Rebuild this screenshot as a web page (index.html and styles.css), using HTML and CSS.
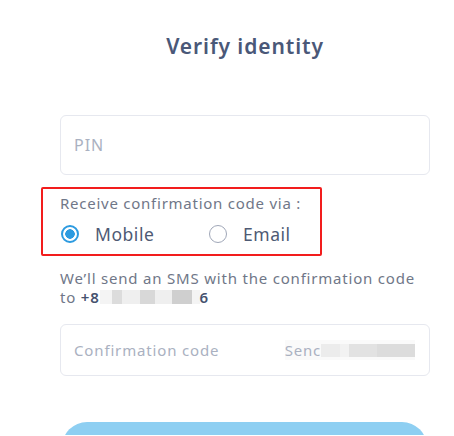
FILE: index.html
```html
<!DOCTYPE html>
<html>
<head>
<meta charset="utf-8">
<link rel="stylesheet" href="styles.css">
</head>
<body>
<div class="page">
  <h1 class="title">Verify identity</h1>
  <div class="field pin"><span class="placeholder">PIN</span></div>
  <div class="via">
    <div class="via-label">Receive confirmation code via :</div>
    <div class="radios">
      <label class="radio"><span class="dot checked"></span><span>Mobile</span></label>
      <label class="radio"><span class="dot"></span><span>Email</span></label>
    </div>
    <div class="highlight"></div>
  </div>
  <p class="sms">We’ll send an SMS with the confirmation code<br>to <b>+8<span class="blur num"></span>6</b></p>
  <div class="field code">
    <span class="placeholder">Confirmation code</span>
    <span class="send">Senc<span class="blur sendblur"></span></span>
  </div>
  <div class="btn-clip"><div class="btn"></div></div>
</div>
</body>
</html>
```
FILE: styles.css
```css
html, body { margin: 0; padding: 0; background: #fff; }
body { font-family: "Noto Sans", "Open Sans", sans-serif; width: 454px; height: 436px; overflow: hidden; }
.page { margin-left: 60px; width: 370px; position: relative; padding-top: 30px; }
.title { margin: 0; text-align: center; font-size: 21px; font-weight: 600; color: #4a5878; line-height: 32px; letter-spacing: 0.9px; }
.field { box-sizing: border-box; border: 1px solid #e6e8ef; border-radius: 6px; display: flex; align-items: center; padding-left: 13px; }
.pin { margin-top: 53px; height: 60px; }
.placeholder { color: #aab1c1; font-size: 16px; letter-spacing: 1px; }
.via { position: relative; margin-top: 18px; }
.via-label { color: #707788; font-size: 15px; line-height: 20px; letter-spacing: 0.75px; }
.radios { display: flex; margin-top: 10px; height: 22px; align-items: center; }
.radio { display: flex; align-items: center; color: #4e5a74; font-size: 17.5px; letter-spacing: 0.55px; }
.radio:first-child { width: 148px; }
.dot { box-sizing: border-box; width: 18px; height: 18px; border-radius: 50%; border: 1.5px solid #a0a7b8; margin-left: 1px; margin-right: 16px; }
.dot.checked { border: 2px solid #2d9be0; background: radial-gradient(circle, #2d9be0 0 4.5px, #fff 5px); }
.highlight { position: absolute; left: -19px; top: -6px; width: 281px; height: 69px; box-sizing: border-box; border: 2px solid #f21d1d; border-radius: 2px; }
.sms { margin: 24px 0 0; color: #707788; font-size: 15px; line-height: 19px; letter-spacing: 0.8px; }
.sms b { color: #46526e; font-weight: 600; }
.blur { display: inline-block; vertical-align: middle; }
.num { width: 100px; height: 14px; background: linear-gradient(90deg, #f4f4f4 0 12%, #dcdcdc 12% 22%, #efefef 22% 40%, #d8d8d8 40% 55%, #efefef 55% 72%, #cfcfcf 72% 92%, #f4f4f4 92%); margin-top: -3px; }
.code { margin-top: 17px; height: 52px; justify-content: space-between; padding-right: 14px; }
.code .placeholder { font-size: 15px; letter-spacing: 0.85px; }
.send { color: #aab1c1; font-size: 15px; letter-spacing: 0.8px; display: flex; align-items: center; background: #fafafa; }
.sendblur { width: 94px; height: 13px; background: linear-gradient(90deg, #ececec 0 20%, #f2f2f2 20% 30%, #e2e2e2 30% 60%, #dcdcdc 60%); }
.btn-clip { margin-top: 46px; height: 13px; overflow: hidden; }
.btn { height: 50px; border-radius: 26px; background: #8ecff2; margin-left: 2px; margin-right: 3px; }
```
